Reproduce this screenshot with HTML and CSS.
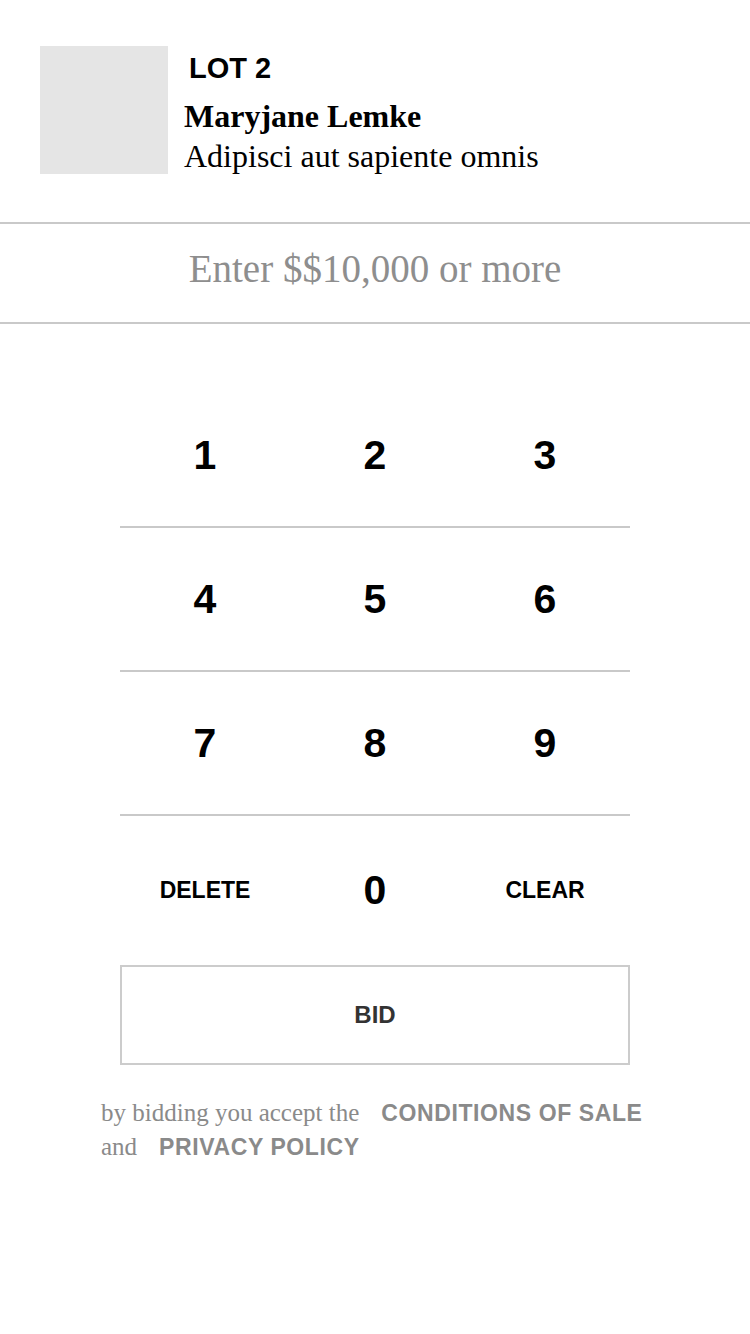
FILE: index.html
```html
<!DOCTYPE html>
<html lang="en">
<head>
<meta charset="utf-8">
<title>Place bid</title>
<link rel="stylesheet" href="styles.css">
</head>
<body>
<div class="page">
  <header class="lot">
    <div class="lot-thumb"></div>
    <div class="lot-info">
      <div class="lot-number">LOT 2</div>
      <div class="lot-artist">Maryjane Lemke</div>
      <div class="lot-title">Adipisci aut sapiente omnis</div>
    </div>
  </header>

  <div class="amount">
    <span class="amount-placeholder">Enter $$10,000 or more</span>
  </div>

  <div class="keypad">
    <div class="key-row">
      <button class="key digit">1</button>
      <button class="key digit">2</button>
      <button class="key digit">3</button>
    </div>
    <div class="key-row">
      <button class="key digit">4</button>
      <button class="key digit">5</button>
      <button class="key digit">6</button>
    </div>
    <div class="key-row">
      <button class="key digit">7</button>
      <button class="key digit">8</button>
      <button class="key digit">9</button>
    </div>
    <div class="key-row last">
      <button class="key action">DELETE</button>
      <button class="key digit">0</button>
      <button class="key action">CLEAR</button>
    </div>
    <button class="bid-button">BID</button>
  </div>

  <footer class="terms">
    <span class="terms-text">by bidding you accept the</span>
    <a class="terms-link">CONDITIONS OF SALE</a>
    <span class="terms-text">and</span>
    <a class="terms-link">PRIVACY POLICY</a>
  </footer>
</div>
</body>
</html>
```

FILE: styles.css
```css
* {
  box-sizing: border-box;
}

html, body {
  margin: 0;
  padding: 0;
  background: #ffffff;
}

.page {
  width: 750px;
  min-height: 1334px;
  font-family: "Liberation Serif", "Times New Roman", serif;
  color: #000;
}

.lot {
  display: flex;
  align-items: flex-start;
  gap: 16px;
  padding: 46px 40px 48px;
}

.lot-thumb {
  width: 128px;
  height: 128px;
  flex: 0 0 128px;
  background: #e5e5e5;
}

.lot-info {
  padding-top: 2px;
  height: 128px;
  display: flex;
  flex-direction: column;
}

.lot-number {
  font-family: "Liberation Sans", Arial, sans-serif;
  font-weight: 700;
  font-size: 29px;
  line-height: 40px;
  padding-left: 5px;
  margin-bottom: 5px;
}

.lot-artist {
  font-weight: 700;
  font-size: 32px;
  line-height: 46px;
}

.lot-title {
  font-size: 32px;
  line-height: 35px;
}

.amount {
  height: 102px;
  border-top: 2px solid #c9c9c9;
  border-bottom: 2px solid #c9c9c9;
  padding-bottom: 10px;
  display: flex;
  align-items: center;
  justify-content: center;
}

.amount-placeholder {
  font-size: 39px;
  color: #8e8e8e;
}

.keypad {
  width: 510px;
  margin: 60px auto 0;
  display: flex;
  flex-direction: column;
}

.key-row {
  display: grid;
  grid-template-columns: repeat(3, 1fr);
  height: 144px;
  border-bottom: 2px solid #c9c9c9;
}

.key-row.last {
  height: 149px;
  border-bottom: none;
}

.key {
  border: none;
  background: none;
  padding: 0;
  margin: 0;
  font-family: "Liberation Sans", Arial, sans-serif;
  font-weight: 700;
  color: #000;
  display: flex;
  align-items: center;
  justify-content: center;
}

.key.digit {
  font-size: 41px;
}

.key.action {
  font-size: 23px;
}

.bid-button {
  height: 100px;
  border: 2px solid #cccccc;
  background: #fff;
  font-family: "Liberation Sans", Arial, sans-serif;
  font-weight: 700;
  font-size: 24px;
  color: #333333;
  padding: 0;
}

.terms {
  margin: 31px 0 0 101px;
  width: 560px;
  display: flex;
  flex-wrap: wrap;
  align-items: baseline;
  column-gap: 22px;
  line-height: 33px;
}

.terms-text {
  font-size: 25px;
  color: #8a8a8a;
}

.terms-link {
  font-family: "Liberation Sans", Arial, sans-serif;
  font-weight: 700;
  font-size: 23px;
  letter-spacing: 0.6px;
  color: #8a8a8a;
}
```
